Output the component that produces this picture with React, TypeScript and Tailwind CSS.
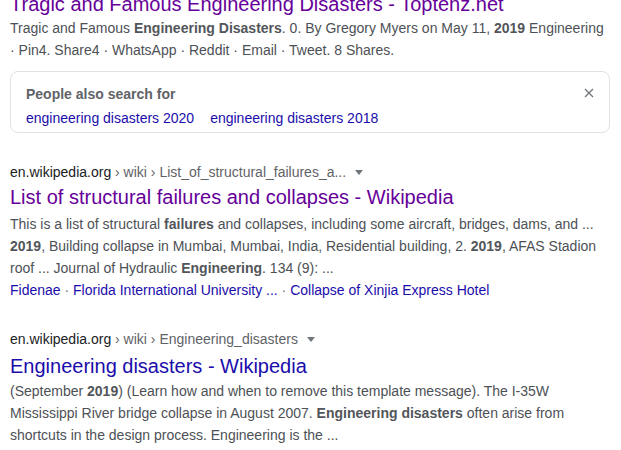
import React from "react";

const results = [
  {
    domain: "en.wikipedia.org",
    path: " › wiki › List_of_structural_failures_a...",
    title: "List of structural failures and collapses - Wikipedia",
    visited: true,
    snippet: (
      <>
        This is a list of structural <b>failures</b> and collapses, including some aircraft, bridges, dams, and ...{" "}
        <b>2019</b>, Building collapse in Mumbai, Mumbai, India, Residential building, 2. <b>2019</b>, AFAS Stadion roof
        ... Journal of Hydraulic <b>Engineering</b>. 134 (9): ...
      </>
    ),
    sitelinks: ["Fidenae", "Florida International University ...", "Collapse of Xinjia Express Hotel"],
  },
  {
    domain: "en.wikipedia.org",
    path: " › wiki › Engineering_disasters",
    title: "Engineering disasters - Wikipedia",
    visited: false,
    snippet: (
      <>
        (September <b>2019</b>) (Learn how and when to remove this template message). The I-35W Mississippi River
        bridge collapse in August 2007. <b>Engineering disasters</b> often arise from shortcuts in the design process.
        Engineering is the ...
      </>
    ),
    sitelinks: [],
  },
];

function UrlLine({ domain, path }: { domain: string; path: string }) {
  return (
    <div className="flex items-center h-[20px] text-[14px] leading-[20px]">
      <span className="text-[#202124]">{domain}</span>
      <span className="text-[#5f6368] whitespace-pre">{path}</span>
      <svg width="8" height="5" viewBox="0 0 8 5" className="ml-[9px] mt-[1px]">
        <path d="M0 0h8L4 5z" fill="#70757a" />
      </svg>
    </div>
  );
}

export default function App() {
  return (
    <main
      className="w-[621px] h-[450px] overflow-hidden bg-white pl-[10px] pr-[12px]"
      style={{ fontFamily: '"Liberation Sans", Arial, sans-serif' }}
    >
      {/* Cut-off result at top */}
      <div className="-mt-[9px]">
        <h3 className="text-[20px] leading-[26px] text-[#660099] whitespace-nowrap">
          Tragic and Famous Engineering Disasters - Toptenz.net
        </h3>
        <p className="text-[14px] leading-[22px] text-[#4d5156] [&_b]:text-[#52565a]">
          Tragic and Famous <b>Engineering Disasters</b>. 0. By Gregory Myers on May 11, <b>2019</b> Engineering ·
          Pin4. Share4 · WhatsApp · Reddit · Email · Tweet. 8 Shares.
        </p>
      </div>

      {/* People also search for */}
      <div className="mt-[10px] w-[600px] border border-[#dfe1e5] rounded-[8px] pl-[15px] pr-[14px] pt-[12px] pb-[3px]">
        <div className="flex items-center justify-between">
          <span className="text-[14px] leading-[20px] font-bold text-[#5f6368]">People also search for</span>
          <svg width="10" height="10" viewBox="0 0 10 10" className="mr-[1px] -mt-[3px]">
            <path d="M1 1l8 8M9 1l-8 8" stroke="#70757a" strokeWidth="1.3" />
          </svg>
        </div>
        <div className="mt-[3px] flex gap-[16px] text-[14px] leading-[22px] text-[#1a0dab]">
          <a>engineering disasters 2020</a>
          <a>engineering disasters 2018</a>
        </div>
      </div>

      {/* Results */}
      {results.map((r, i) => (
        <div key={i} className={i === 0 ? "mt-[29px]" : "mt-[28px]"}>
          <UrlLine domain={r.domain} path={r.path} />
          <h3
            className={`text-[20px] leading-[26px] whitespace-nowrap ${
              r.visited ? "mt-[2px] text-[#660099]" : "mt-[4px] text-[#1a0dab]"
            }`}
          >
            {r.title}
          </h3>
          <p
            className={`text-[14px] leading-[22px] text-[#4d5156] [&_b]:text-[#52565a] ${
              r.visited ? "mt-[3px]" : "mt-[1px]"
            }`}
          >
            {r.snippet}
          </p>
          {r.sitelinks.length > 0 && (
            <div className="text-[14px] leading-[22px] text-[#1a0dab]">
              {r.sitelinks.map((s, j) => (
                <span key={j}>
                  {j > 0 && <span className="text-[#70757a]"> · </span>}
                  <a>{s}</a>
                </span>
              ))}
            </div>
          )}
        </div>
      ))}
    </main>
  );
}
